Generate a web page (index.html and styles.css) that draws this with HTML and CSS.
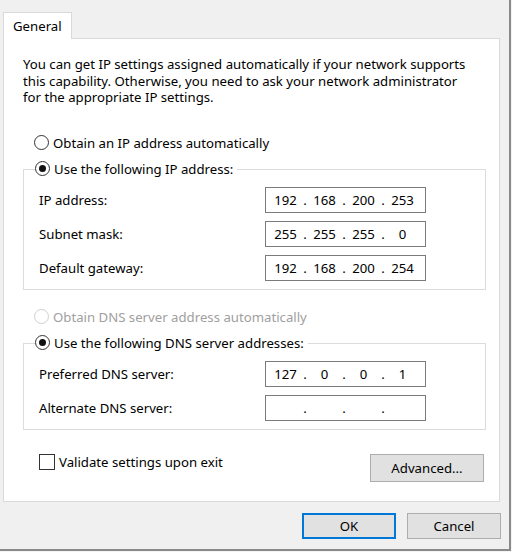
FILE: index.html
```html
<!DOCTYPE html>
<html>
<head>
<meta charset="utf-8">
<link rel="stylesheet" href="styles.css">
</head>
<body>
<div class="window">
  <div class="tabs">
    <div class="tab">General</div>
  </div>
  <div class="panel">
    <p class="desc">You can get IP settings assigned automatically if your network supports this capability. Otherwise, you need to ask your network administrator for the appropriate IP settings.</p>

    <div class="option first">
      <span class="radio"></span><span>Obtain an IP address automatically</span>
    </div>

    <div class="group">
      <div class="legend">
        <span class="radio checked"></span><span>Use the following IP address:</span>
      </div>
      <div class="rows">
        <div class="row"><span class="label">IP address:</span>
          <div class="ip"><span class="seg">192</span><span class="dot">.</span><span class="seg">168</span><span class="dot">.</span><span class="seg">200</span><span class="dot">.</span><span class="seg">253</span></div>
        </div>
        <div class="row"><span class="label">Subnet mask:</span>
          <div class="ip"><span class="seg">255</span><span class="dot">.</span><span class="seg">255</span><span class="dot">.</span><span class="seg">255</span><span class="dot">.</span><span class="seg">0</span></div>
        </div>
        <div class="row"><span class="label">Default gateway:</span>
          <div class="ip"><span class="seg">192</span><span class="dot">.</span><span class="seg">168</span><span class="dot">.</span><span class="seg">200</span><span class="dot">.</span><span class="seg">254</span></div>
        </div>
      </div>
    </div>

    <div class="option disabled">
      <span class="radio"></span><span>Obtain DNS server address automatically</span>
    </div>

    <div class="group">
      <div class="legend">
        <span class="radio checked"></span><span>Use the following DNS server addresses:</span>
      </div>
      <div class="rows">
        <div class="row"><span class="label">Preferred DNS server:</span>
          <div class="ip"><span class="seg">127</span><span class="dot">.</span><span class="seg">0</span><span class="dot">.</span><span class="seg">0</span><span class="dot">.</span><span class="seg">1</span></div>
        </div>
        <div class="row"><span class="label">Alternate DNS server:</span>
          <div class="ip"><span class="seg"></span><span class="dot">.</span><span class="seg"></span><span class="dot">.</span><span class="seg"></span><span class="dot">.</span><span class="seg"></span></div>
        </div>
      </div>
    </div>

    <div class="bottom">
      <div class="check"><span class="box"></span><span>Validate settings upon exit</span></div>
      <button class="btn adv">Advanced...</button>
    </div>
  </div>
  <div class="footer">
    <button class="btn ok">OK</button>
    <button class="btn">Cancel</button>
  </div>
</div>
</body>
</html>
```

FILE: styles.css
```css
* { box-sizing: border-box; }
html, body { margin: 0; padding: 0; }
body {
  background: #f4f4f4;
  font-family: "Noto Sans", "Open Sans", sans-serif;
  font-size: 13.2px;
  color: #000;
  width: 512px;
  height: 552px;
  overflow: hidden;
}
.window {
  width: 511px;
  height: 551px;
  background: #f0f0f0;
  border-right: 2px solid #8a8a8a;
  border-bottom: 2px solid #8a8a8a;
  padding: 12px 0 0 3px;
}
.tabs { display: flex; }
.tab {
  width: 69px;
  height: 27px;
  background: #fff;
  border: 1px solid #d9d9d9;
  border-bottom: none;
  padding: 4px 0 0 9px;
  position: relative;
  z-index: 1;
  margin-bottom: -1px;
}
.panel {
  width: 497px;
  height: 464px;
  background: #fff;
  border: 1px solid #d9d9d9;
  padding: 17px 13px 0 19px;
}
.desc {
  margin: 0;
  line-height: 16.5px;
  width: 445px;
}
.option, .legend {
  display: flex;
  align-items: center;
  height: 18px;
  gap: 4px;
}
.option { margin: 28px 0 0 11px; }
.option.disabled { margin-top: 18px; color: #a0a0a0; }
.option.disabled .radio { border-color: #cfcfcf; }
.radio {
  width: 15px;
  height: 15px;
  border: 1px solid #333;
  border-radius: 50%;
  background: #fff;
  display: flex;
  align-items: center;
  justify-content: center;
  flex: none;
}
.radio.checked::after {
  content: "";
  width: 7px;
  height: 7px;
  border-radius: 50%;
  background: #111;
}
.group {
  margin-top: 17px;
  width: 463px;
  border: 1px solid #dcdcdc;
  padding: 0 0 8px 15px;
}
.legend {
  width: max-content;
  background: #fff;
  margin: -10px 0 -8px -4px;
  padding: 0 4px 0 0;
  position: relative;
}
.rows { display: flex; flex-direction: column; gap: 8px; padding-top: 17px; }
.row { display: flex; align-items: center; }
.label { width: 226px; }
.ip {
  width: 161px;
  height: 26px;
  border: 1px solid #7a7a7a;
  display: flex;
  align-items: center;
  padding-left: 5px;
}
.seg { width: 29px; text-align: center; }
.dot { width: 10px; text-align: center; }
.bottom {
  display: flex;
  justify-content: space-between;
  align-items: flex-start;
  margin-top: 24px;
  padding: 0 2px 0 16px;
}
.check { display: flex; align-items: center; gap: 4px; height: 16px; }
.box {
  width: 16px;
  height: 16px;
  border: 1px solid #333;
  background: #fff;
}
.btn {
  font-family: inherit;
  font-size: 13.2px;
  color: #000;
  background: #e1e1e1;
  border: 1px solid #adadad;
  width: 94px;
  height: 26px;
  padding: 0;
  border-radius: 0;
}
.btn.adv { width: 114px; height: 28px; }
.btn.ok { border: 2px solid #0078d7; }
.footer {
  display: flex;
  justify-content: flex-end;
  gap: 11px;
  margin-top: 11px;
  padding-right: 8px;
}
```
